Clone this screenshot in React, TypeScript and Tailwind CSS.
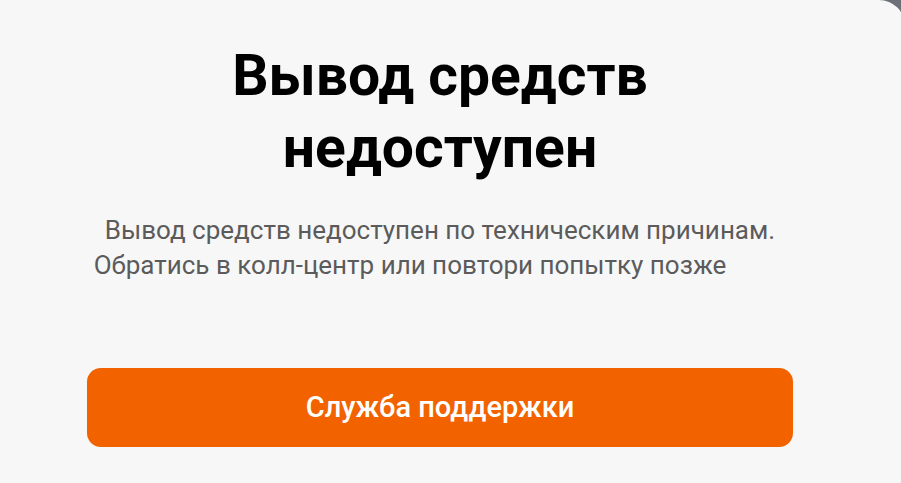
export default function App() {
  return (
    <div className="h-[483px] w-[901px] overflow-hidden bg-[#6d7078]">
      <div className="flex h-[496px] w-[905px] flex-col items-center rounded-r-[26px] bg-[#f7f7f7] pr-[25px]">
        {/* Title */}
        <h1 className="mt-[40px] text-center font-['Roboto','Liberation_Sans',sans-serif] text-[57px] font-bold leading-[72px] text-black">
          Вывод средств
          <br />
          недоступен
        </h1>

        {/* Description */}
        <p className="mt-[29px] text-center font-['Roboto','Liberation_Sans',sans-serif] text-[26px] leading-[35px] text-[#5b5b5b]">
          Вывод средств недоступен по техническим причинам.
          <br />
          Обратись в колл-центр или повтори попытку позже
          <span className="inline-block w-[60px]" aria-hidden="true" />
        </p>

        {/* Support button */}
        <button className="mt-[85px] flex h-[79px] w-[706px] items-center justify-center rounded-[14px] bg-[#f26300] font-['Roboto','Liberation_Sans',sans-serif] text-[29px] font-medium text-white">
          Служба поддержки
        </button>
      </div>
    </div>
  );
}
